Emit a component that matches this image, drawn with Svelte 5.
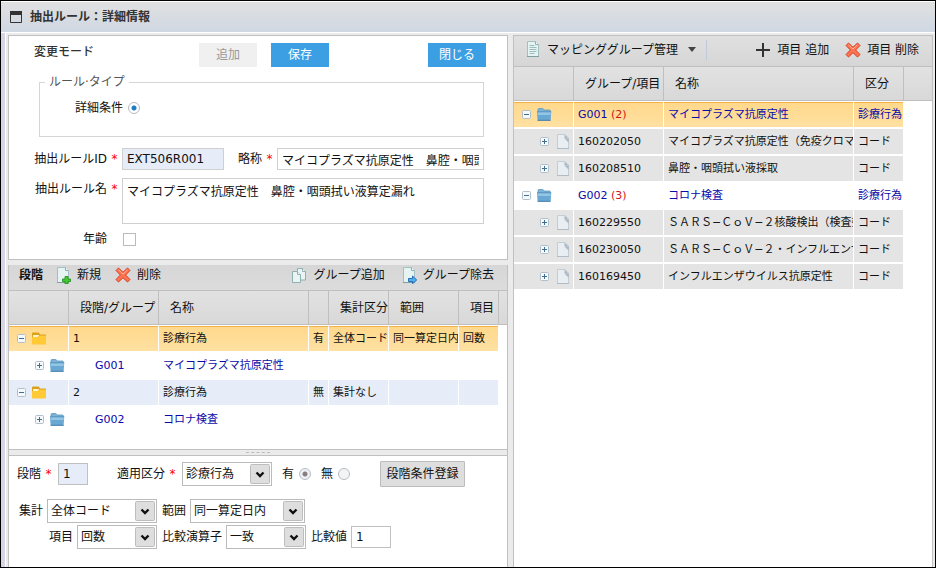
<script lang="ts">
	interface StageRow {
		id: string;
		name: string;
		child?: boolean;
		selected?: boolean;
		flag?: string;
		total?: string;
		range?: string;
		item?: string;
	}

	interface MappingRow {
		id: string;
		name: string;
		kind: string;
		count?: number;
		selected?: boolean;
	}

	const stages: StageRow[] = [
		{ id: '1', name: '診療行為', flag: '有', total: '全体コード', range: '同一算定日内', item: '回数', selected: true },
		{ id: 'G001', name: 'マイコプラズマ抗原定性', child: true },
		{ id: '2', name: '診療行為', flag: '無', total: '集計なし' },
		{ id: 'G002', name: 'コロナ検査', child: true }
	];

	const mappings: MappingRow[] = [
		{ id: 'G001', count: 2, name: 'マイコプラズマ抗原定性', kind: '診療行為', selected: true },
		{ id: '160202050', name: 'マイコプラズマ抗原定性（免疫クロマ', kind: 'コード' },
		{ id: '160208510', name: '鼻腔・咽頭拭い液採取', kind: 'コード' },
		{ id: 'G002', count: 3, name: 'コロナ検査', kind: '診療行為' },
		{ id: '160229550', name: 'ＳＡＲＳ−ＣｏＶ−２核酸検出（検査委', kind: 'コード' },
		{ id: '160230050', name: 'ＳＡＲＳ−ＣｏＶ−２・インフルエンザ', kind: 'コード' },
		{ id: '160169450', name: 'インフルエンザウイルス抗原定性', kind: 'コード' }
	];

	let shortName = $state('マイコプラズマ抗原定性　鼻腔・咽頭拭い液算定漏れ');
	let ruleName = $state('マイコプラズマ抗原定性　鼻腔・咽頭拭い液算定漏れ');
	let hasAge = $state(false);
	let presence = $state('有');
	let compareValue = $state('1');
</script>

{#snippet expander(open: boolean)}
	<button type="button" class="expander" aria-label={open ? '閉じる' : '開く'}>
		<svg width="9" height="9" viewBox="0 0 9 9" aria-hidden="true">
			<rect x=".5" y=".5" width="8" height="8" rx="1" fill="#f6f9fb" stroke="#b0bfc9" />
			<path d={open ? 'M2 4.5h5' : 'M2 4.5h5M4.5 2v5'} stroke="#3f6f8d" />
		</svg>
	</button>
{/snippet}

{#snippet folder(yellow: boolean)}
	{#if yellow}
		<svg class="folder" width="15" height="13" viewBox="0 0 15 13" aria-hidden="true">
			<path d="M0 10V1.5Q0 .5 1 .5h5q1 0 1.400 .8L8 2.500h5q1 0 1 1V7z" fill="#d9a11c" />
			<path d="M1 3h6l-1 3H1z" fill="#fff3cf" />
			<path d="M0 5.500Q0 5 .7 5H5q1 0 1.500-.7T8 3.500h5.200q.8 0 .8.8v7.200q0 1-1 1H1q-1 0-1-1z" fill="#ffca35" />
		</svg>
	{:else}
		<svg class="folder" width="15" height="13" viewBox="0 0 15 13" aria-hidden="true">
			<path d="M1 5V1.500Q1 .5 2 .5h3.500q.8 0 1 .8l.5.700h5.500q.8 0 .8.8V5z" fill="#7db3d8" stroke="#5c97bf" stroke-width=".8" />
			<path d="M0 3.500h14.200v1L13.600 12.500H.6L0 4.500z" fill="#69a8d3" />
			<path d="M.6 4.300h13v2.700H.8z" fill="#93c5e5" />
			<path d="M0 3.700h14.200" stroke="#5590ba" stroke-width=".8" />
			<path d="M.6 12.300h13" stroke="#417fab" />
		</svg>
	{/if}
{/snippet}

{#snippet page()}
	<svg class="page" width="12" height="15" viewBox="0 0 12 15" aria-hidden="true">
		<path d="M.5 .5H8L11.500 4v10.500H.5z" fill="#e9eef2" stroke="#c3cdd5" />
		<path d="M7.500 4.500h4v4z" fill="#90a3b2" opacity=".7" />
		<path d="M7.500 .5V4.500H11.500z" fill="#a9b9c6" />
		<path d="M0 14.500h12" stroke="#b0bcc6" />
	</svg>
{/snippet}

{#snippet cross()}
	<svg width="16" height="16" viewBox="0 0 16 16" aria-hidden="true">
		<path
			d="M3.500 1 8 5.300 12.500 1 15 3.500 10.600 8 15 12.500 12.500 15 8 10.700 3.500 15 1 12.500 5.400 8 1 3.500z"
			fill="#ff7350"
			stroke="#d2401f"
			stroke-linejoin="round"
		/>
		<path d="M3.500 2.800 8 7l4.500-4.200" fill="none" stroke="#ffb39c" />
	</svg>
{/snippet}

{#snippet sheet(mark: 'add' | 'remove' | 'copy' | 'text')}
	<svg width="16" height="17" viewBox="0 0 16 17" aria-hidden="true">
		{#if mark === 'copy'}
			<path d="M6.500 1.500h5l3 3v8.500h-8z" fill="#e9f4f3" stroke="#8fb0b3" />
			<path d="M11.500 1.500v3h3" fill="#fff" stroke="#8fb0b3" />
			<path d="M1.500 4.500h5l3 3v8h-8z" fill="#e9f4f3" stroke="#8fb0b3" />
			<path d="M6.500 4.500v3h3" fill="#fff" stroke="#8fb0b3" />
		{:else}
			<path d="M2.500 .5h8l3 3v12h-11z" fill="#e6f3f3" stroke="#a3bfc2" />
			<path d="M10.500 .5v3h3" fill="#fff" stroke="#8aaeb2" />
			<path d="M2 15.500h12" stroke="#7f9fa3" />
		{/if}
		{#if mark === 'add'}
			<path d="M10 9.500h3v2.500h2.500v2.500H13V17h-3v-2.500H7.500V12H10z" fill="#44c92e" stroke="#188b1b" stroke-width=".8" />
		{:else if mark === 'remove'}
			<path d="M7.500 11.500h4V9l4.200 4-4.200 3.700v-2.200h-4z" fill="#4fb2ef" stroke="#1763af" stroke-width=".9" />
		{:else if mark === 'text'}
			<path d="M4.500 4.500h5M4.500 6.500h7M4.500 8.500h7M4.500 10.500h7M4.500 12.500h5" stroke="#9dbcbc" />
		{/if}
	</svg>
{/snippet}

{#snippet dropdown(id: string, value: string, size: string)}
	<span class="dropdown {size}">
		<select {id}>
			<option>{value}</option>
		</select>
		<svg width="20" height="20" viewBox="0 0 20 20" aria-hidden="true">
			<rect x=".5" y=".5" width="19" height="19" rx="1" fill="#dedede" stroke="#bdbdbd" />
			<path d="M6.500 8.500 10 12l3.500-3.500" fill="none" stroke="#111" stroke-width="2.400" />
		</svg>
	</span>
{/snippet}

<div class="window">
	<header class="titlebar">
		<svg width="12" height="12" viewBox="0 0 12 12" aria-hidden="true">
			<path d="M.5 .5h11v11H.5z" fill="none" stroke="#333" />
			<path d="M0 0h12v4H0z" fill="#333" />
		</svg>
		<h1>抽出ルール：詳細情報</h1>
	</header>

	<main>
		<div class="left">
			<form class="panel rule">
				<div class="actions">
					<h2>変更モード</h2>
					<button type="button" class="btn" disabled>追加</button>
					<button type="button" class="btn">保存</button>
					<button type="button" class="btn close">閉じる</button>
				</div>

				<fieldset>
					<legend>ルール·タイプ</legend>
					<label for="type-detail">詳細条件</label>
					<input type="radio" id="type-detail" name="type" checked />
				</fieldset>

				<div class="field">
					<label class="caption" for="rule-id">抽出ルールID</label>
					<span class="req">*</span>
					<input type="text" class="rule-id" id="rule-id" value="EXT506R001" readonly />
					<label class="short" for="short-name">略称</label>
					<span class="req">*</span>
					<input type="text" class="grow" id="short-name" bind:value={shortName} />
				</div>
				<div class="field">
					<label class="caption" for="rule-name">抽出ルール名</label>
					<span class="req">*</span>
					<textarea class="grow" id="rule-name" bind:value={ruleName}></textarea>
				</div>
				<div class="field age">
					<label class="caption" for="age">年齢</label>
					<input type="checkbox" id="age" bind:checked={hasAge} />
				</div>
			</form>

			<section class="stage">
				<div class="toolbar slim">
					<strong>段階</strong>
					<button type="button" class="tool">{@render sheet('add')}新規</button>
					<button type="button" class="tool">{@render cross()}削除</button>
					<button type="button" class="tool push">{@render sheet('copy')}グループ追加</button>
					<button type="button" class="tool">{@render sheet('remove')}グループ除去</button>
				</div>

				<div class="grid">
					<table>
						<colgroup>
							<col class="w60" /><col class="w90" /><col class="w150" /><col class="w20" />
							<col class="w60" /><col class="w70" /><col class="w40" /><col />
						</colgroup>
						<thead>
							<tr>
								<th></th>
								<th>段階/グループ</th>
								<th>名称</th>
								<th></th>
								<th>集計区分</th>
								<th>範囲</th>
								<th>項目</th>
								<th class="rest"></th>
							</tr>
						</thead>
						<tbody>
							{#each stages as row (row.id)}
								<tr class:selected={row.selected} class:link={row.child} class:blue={!row.child}>
									<td>
										<span class="tree" class:child={row.child}>
											{@render expander(!row.child)}
											{@render folder(!row.child)}
										</span>
									</td>
									<td class:indent={row.child}>{row.id}</td>
									<td>{row.name}</td>
									<td>{row.flag ?? ''}</td>
									<td>{row.total ?? ''}</td>
									<td>{row.range ?? ''}</td>
									<td>{row.item ?? ''}</td>
									<td class="rest"></td>
								</tr>
							{/each}
						</tbody>
					</table>
				</div>

				<div class="splitter"><span></span></div>

				<form class="condition">
					<div class="line">
						<label for="stage-no">段階</label>
						<span class="req">*</span>
						<input type="text" class="tiny" id="stage-no" value="1" readonly />
						<label class="apply" for="apply">適用区分</label>
						<span class="req">*</span>
						{@render dropdown('apply', '診療行為', 'w90')}
						<label class="choice">有 <input type="radio" name="presence" value="有" bind:group={presence} disabled /></label>
						<label class="choice">無 <input type="radio" name="presence" value="無" bind:group={presence} disabled /></label>
						<button type="button" class="register">段階条件登録</button>
					</div>
					<div class="line second">
						<label for="total">集計</label>
						{@render dropdown('total', '全体コード', 'w110')}
						<label class="next" for="range">範囲</label>
						{@render dropdown('range', '同一算定日内', 'w115')}
					</div>
					<div class="line third">
						<label for="item">項目</label>
						{@render dropdown('item', '回数', 'w80')}
						<label class="next" for="operator">比較演算子</label>
						{@render dropdown('operator', '一致', 'w80')}
						<label class="next" for="compare">比較値</label>
						<input type="text" class="compare" id="compare" bind:value={compareValue} />
					</div>
				</form>
			</section>
		</div>

		<section class="panel mapping">
			<div class="toolbar">
				<button type="button" class="tool menu">
					{@render sheet('text')}マッピンググループ管理
					<svg class="caret" width="8" height="5" viewBox="0 0 8 5" aria-hidden="true">
						<path d="M0 0h8L4 5z" fill="#444" />
					</svg>
				</button>
				<span class="divider"></span>
				<button type="button" class="tool push">
					<svg width="16" height="16" viewBox="0 0 16 16" aria-hidden="true">
						<path d="M8 1v14M1 8h14" stroke="#333" stroke-width="2" />
					</svg>項目 追加
				</button>
				<button type="button" class="tool">{@render cross()}項目 削除</button>
			</div>

			<table>
				<colgroup>
					<col class="w60" /><col class="w90" /><col class="w190" /><col class="w50" /><col />
				</colgroup>
				<thead>
					<tr>
						<th></th>
						<th>グループ/項目</th>
						<th>名称</th>
						<th>区分</th>
						<th class="rest"></th>
					</tr>
				</thead>
				<tbody>
					{#each mappings as row (row.id)}
						<tr class:selected={row.selected} class:link={row.count} class:grey={!row.count}>
							<td>
								<span class="tree" class:child={!row.count}>
									{@render expander(!!row.count)}
									{#if row.count}{@render folder(false)}{:else}{@render page()}{/if}
								</span>
							</td>
							<td>{row.id}{#if row.count}&nbsp;<span class="count">({row.count})</span>{/if}</td>
							<td>{row.name}</td>
							<td>{row.kind}</td>
							<td class="rest"></td>
						</tr>
					{/each}
				</tbody>
			</table>
		</section>
	</main>
</div>

<style>
	:global(body) {
		margin: 0;
	}
	.window,
	.window :global(*) {
		box-sizing: border-box;
	}
	.window {
		display: flex;
		flex-direction: column;
		min-height: 100vh;
		border: 1px solid #000;
		font: 12px/18px 'DejaVu Sans', 'Noto Sans CJK JP', sans-serif;
		color: #111;
		background: #ebebeb;
	}
	h1,
	h2 {
		margin: 0;
		font-size: 12px;
		color: #333;
	}
	h2 {
		font-weight: 500;
	}
	svg {
		display: block;
		flex: none;
	}
	button,
	input,
	select,
	textarea {
		margin: 0;
		font: inherit;
		color: inherit;
	}

	.titlebar {
		display: flex;
		align-items: center;
		gap: 8px;
		height: 32px;
		padding-left: 9px;
		border: solid #fff;
		border-width: 1px 0;
		background: linear-gradient(#e0e0e0, #cfd8e3);
	}
	main {
		flex: 1;
		display: grid;
		grid-template-columns: minmax(0, 500fr) minmax(0, 420fr);
		gap: 5px;
		padding: 2px 2px 0 3px;
		border-left: 4px solid #d5d5e5;
		box-shadow: inset 1px 0 #fff;
	}
	.left {
		display: flex;
		flex-direction: column;
		gap: 5px;
	}
	.panel {
		border: 1px solid #c0c0c0;
		background: #fff;
	}
	.mapping {
		border-bottom: 0;
	}

	.rule {
		padding: 7px 23px 13px 0;
	}
	.actions {
		display: flex;
		padding-left: 25px;
		margin-bottom: 6px;
	}
	.actions h2 {
		width: 165px;
	}
	.btn {
		width: 58px;
		height: 24px;
		margin-right: 14px;
		padding: 0;
		border: 0;
		color: #fff;
		background: #3c9fe3;
	}
	.btn:disabled {
		color: #999;
		background: #f0f0f0;
	}
	.close {
		margin-left: auto;
		margin-right: -2px;
	}
	fieldset {
		display: flex;
		align-items: center;
		margin: 0 0 11px 30px;
		padding: 8px 0 19px 35px;
		border: 1px solid #d5d5d5;
	}
	legend {
		margin-left: -30px;
		padding: 0 4px;
		color: #555;
	}
	.field {
		display: flex;
		margin-bottom: 8px;
		line-height: 22px;
	}
	.caption {
		width: 98px;
		text-align: right;
	}
	.short {
		margin-left: 14px;
	}
	.req {
		width: 15px;
		text-align: center;
		color: #f00;
	}
	.grow {
		flex: 1;
		min-width: 0;
	}
	input[type='text'],
	textarea {
		height: 22px;
		padding: 0 4px;
		border: 1px solid #d0d0d0;
		border-radius: 0;
		background: #fff;
		line-height: 18px;
	}
	input[readonly] {
		background: #e6edf8;
	}
	.rule-id {
		width: 102px;
	}
	textarea {
		display: block;
		height: 46px;
		padding-top: 4px;
		resize: none;
	}
	.age {
		align-items: center;
		margin: 0;
		line-height: 14px;
	}
	input[type='checkbox'] {
		appearance: none;
		width: 13px;
		height: 13px;
		margin-left: 16px;
		border: 1px solid #bbb;
		background: #fff;
	}
	input[type='checkbox']:checked {
		background: #1c7cc4;
	}
	input[type='radio'] {
		appearance: none;
		width: 12px;
		height: 12px;
		margin-left: 5px;
		border: 1px solid #b5bcc2;
		border-radius: 50%;
		background: #fff;
	}
	input[type='radio']:checked {
		background: radial-gradient(circle, #1c7cc4 0 2px, #fff 3px);
	}
	input[type='radio']:disabled {
		background: #f4f4f4;
	}
	input[type='radio']:disabled:checked {
		background: radial-gradient(circle, #8a7d7d 0 2px, #eef2f6 3px);
	}

	.stage {
		flex: 1;
		display: flex;
		flex-direction: column;
		border: solid #c0c0c0;
		border-width: 0 1px;
		background: #fff;
	}
	.toolbar {
		display: flex;
		align-items: center;
		height: 31px;
		padding: 0 13px 3px 11px;
		border-bottom: 1px solid #bfbfbf;
		background: linear-gradient(#e0e0e0, #d6d6d6);
	}
	.slim {
		height: 26px;
		padding: 0 13px 5px 10px;
		background: linear-gradient(#d6d6d6, #dcdcdc);
	}
	.tool {
		display: flex;
		align-items: center;
		gap: 6px;
		margin-left: 14px;
		padding: 0;
		border: 0;
		background: none;
		white-space: nowrap;
	}
	.slim strong + .tool {
		margin-left: 12px;
	}
	.tool.push {
		margin-left: auto;
		margin-right: 2px;
	}
	.tool.menu {
		margin-left: 0;
	}
	.caret {
		margin-left: 4px;
	}
	.divider {
		width: 1px;
		height: 20px;
		margin-left: 10px;
		background: #bfcbd6;
	}

	.grid {
		padding-bottom: 16px;
	}
	table {
		width: 100%;
		table-layout: fixed;
		border-collapse: separate;
		border-spacing: 0;
	}
	.w20 {
		width: 20px;
	}
	.w40 {
		width: 40px;
	}
	.w50 {
		width: 50px;
	}
	.w60 {
		width: 60px;
	}
	.w70 {
		width: 70px;
	}
	.w80 {
		width: 80px;
	}
	.w90 {
		width: 90px;
	}
	.w110 {
		width: 110px;
	}
	.w115 {
		width: 115px;
	}
	.w150 {
		width: 150px;
	}
	.w190 {
		width: 190px;
	}
	th,
	td {
		overflow: hidden;
		white-space: nowrap;
		text-align: left;
	}
	th {
		height: 34px;
		padding: 0 0 0 11px;
		border: solid #bfbfbf;
		border-width: 0 1px 1px 0;
		font-weight: 400;
		background: linear-gradient(#e2e2e2, #d8d8d8);
	}
	td {
		height: 27px;
		padding: 0 0 0 4px;
		border: solid #fff;
		border-width: 1px 1px 1px 0;
		font-size: 11px;
	}
	td:first-child,
	th:first-child {
		padding: 0;
	}
	th.rest,
	td.rest {
		padding: 0;
		border-right: 0;
	}
	.blue td:not(.rest) {
		background: #e6edf8;
	}
	.grey td:not(.rest) {
		background: #e4e4e4;
	}
	.selected td:not(.rest) {
		background: linear-gradient(#ffd88a, #ffe1a3);
		box-shadow: inset 0 1px #f3b04b;
	}
	.link {
		color: #0a0aa8;
	}
	.count {
		color: #d01414;
	}
	td.indent {
		padding-left: 26px;
	}
	.tree {
		display: flex;
		align-items: center;
		padding-left: 8px;
	}
	.child {
		padding-left: 26px;
	}
	.expander {
		padding: 0;
		border: 0;
		background: none;
	}
	.folder {
		margin-left: 6px;
	}
	.page {
		margin-left: 8px;
	}

	.splitter {
		display: flex;
		justify-content: center;
		align-items: center;
		height: 7px;
		border: solid #c0c0c0;
		border-width: 1px 0;
		background: #ebebeb;
	}
	.splitter span {
		width: 24px;
		border-top: 1px dashed #bbb;
	}
	.condition {
		padding: 5px 8px;
	}
	.line {
		display: flex;
		align-items: center;
		height: 26px;
	}
	.line .req {
		margin-right: 2px;
	}
	.line .tiny {
		width: 30px;
		border-color: #c0c0c0;
	}
	.apply {
		margin-left: 29px;
	}
	.choice {
		display: flex;
		align-items: center;
		margin-left: 10px;
	}
	.register {
		width: 85px;
		height: 26px;
		margin-left: 30px;
		padding: 0;
		border: 1px solid #bcbcbc;
		border-radius: 1px;
		background: #dedede;
	}
	.second,
	.third {
		gap: 4px;
	}
	.second {
		margin-top: 11px;
		padding-left: 2px;
	}
	.third {
		padding-left: 32px;
	}
	.next {
		margin-left: 1px;
	}
	.line .compare {
		width: 40px;
		border-color: #c0c0c0;
	}
	.dropdown {
		position: relative;
		height: 24px;
	}
	.dropdown select {
		appearance: none;
		display: block;
		width: 100%;
		height: 24px;
		padding: 0 22px 0 3px;
		border: 1px solid #bbb;
		border-radius: 0;
		background: #fff;
	}
	.dropdown svg {
		position: absolute;
		top: 2px;
		right: 2px;
		pointer-events: none;
	}
</style>
